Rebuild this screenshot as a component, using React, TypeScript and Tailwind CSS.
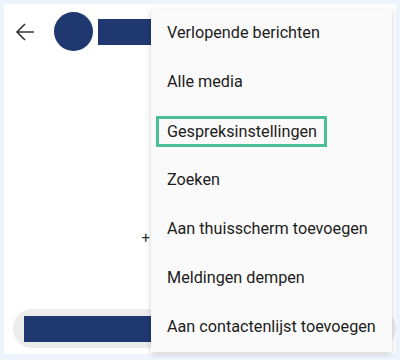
import React from "react";

const items = [
  "Verlopende berichten",
  "Alle media",
  "Gespreksinstellingen",
  "Zoeken",
  "Aan thuisscherm toevoegen",
  "Meldingen dempen",
  "Aan contactenlijst toevoegen",
];

export default function App() {
  return (
    <div className="h-[360px] w-[400px] bg-[#eef4fb] px-1 pt-1 font-['Roboto',sans-serif]">
      <div className="relative flex h-[350px] flex-col bg-white">
        {/* Header */}
        <div className="flex items-center pl-[11px] pt-2">
          <svg width="20" height="20" viewBox="0 0 20 20" fill="none" stroke="#333" strokeWidth="1.6">
            <path d="M19 10H2M10 2l-8 8 8 8" />
          </svg>
          <div className="ml-[19px] h-[39px] w-[39px] rounded-full bg-[#1f3870]" />
          <div className="ml-[5px] h-[26px] w-[80px] bg-[#1f3870]" />
        </div>

        {/* Body */}
        <div className="flex flex-1 items-center justify-end pr-[246px] pb-[14px] pt-[130px]">
          <span className="text-[15px] leading-none text-[#333]">+</span>
        </div>

        {/* Input bar */}
        <div className="mb-[6px] ml-[9px] flex h-[39px] items-center rounded-full bg-[#ececec] pl-[11px]">
          <div className="h-[26px] w-[160px] bg-[#1f3870]" />
        </div>

        {/* Overflow menu */}
        <div className="absolute left-[147px] top-[5px] w-[241px] bg-[#fafafa] shadow-[0_2px_6px_rgba(0,0,0,0.18)]">
          {items.map((label, i) => (
            <div key={label} className="flex h-[49px] items-center pl-4 text-[16.2px] text-[#1c1c1c]">
              {i === 2 ? (
                <span className="-ml-[11px] border-[3px] border-[#4cbf97] pl-2 pr-[7px] leading-[25px]">{label}</span>
              ) : (
                label
              )}
            </div>
          ))}
        </div>
      </div>
    </div>
  );
}
